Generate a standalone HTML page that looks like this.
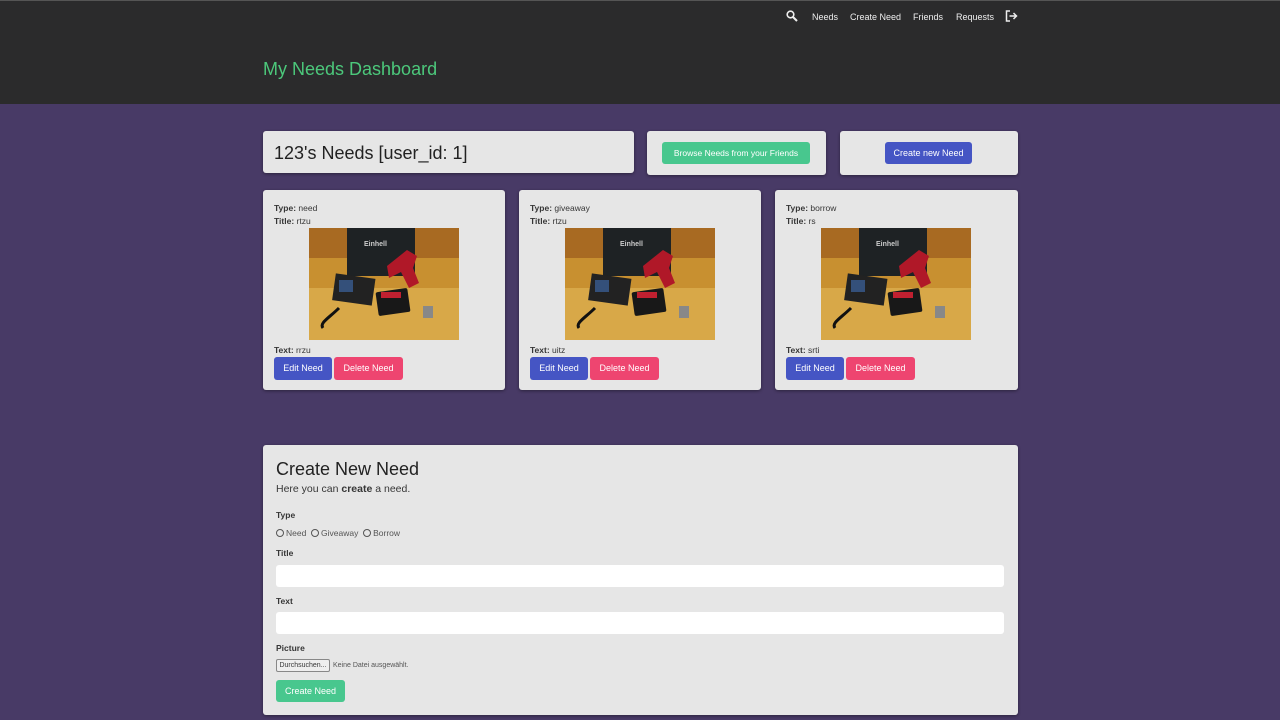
<!DOCTYPE html>
<html><head><meta charset="utf-8"><style>
*{box-sizing:border-box;margin:0;padding:0}
body{width:1280px;height:720px;overflow:hidden;background:#483a66;font-family:"Liberation Sans",sans-serif;color:#363636;position:relative}
.hdr{position:absolute;left:0;top:0;width:1280px;height:104px;background:#2b2b2c;border-top:1px solid #555}
.nav{position:absolute;top:11px;font-size:9px;color:#eee}
.h1{position:absolute;left:263px;top:58px;font-size:18px;color:#4cc87b}
.box{position:absolute;background:#e6e6e6;border-radius:3px;box-shadow:0 1px 3px rgba(0,0,0,.4)}
.btn{position:absolute;color:#fff;font-size:9px;border-radius:3px;text-align:center}
.card .l{position:absolute;left:11px;font-size:8.5px}
.card b{font-weight:bold}
.lbl{position:absolute;left:13px;font-size:8.5px;font-weight:bold}
.inp{position:absolute;left:13px;width:728px;height:22px;background:#fff;border-radius:3px}
.r{display:inline-block;width:8px;height:8px;border:1px solid #555;border-radius:50%;vertical-align:-1px;margin-right:2px}
</style></head><body>
<div class="hdr">
<svg style="position:absolute;left:786px;top:9px" width="12" height="12" viewBox="0 0 12 12"><circle cx="4.5" cy="4.5" r="3.3" stroke="#eee" stroke-width="1.6" fill="none"/><path d="M7 7L11 11" stroke="#eee" stroke-width="2"/></svg>
<div class="nav" style="left:812px">Needs</div>
<div class="nav" style="left:850px">Create Need</div>
<div class="nav" style="left:913px">Friends</div>
<div class="nav" style="left:956px">Requests</div>
<svg style="position:absolute;left:1005px;top:9px" width="13" height="12" viewBox="0 0 13 12"><path d="M5 1H1.5V11H5" stroke="#eee" stroke-width="1.5" fill="none"/><path d="M4.5 6H11M8.5 3L11.5 6L8.5 9" stroke="#eee" stroke-width="1.5" fill="none"/></svg>
<div class="h1">My Needs Dashboard</div>
</div>

<div class="box" style="left:263px;top:131px;width:371px;height:42px"><div style="position:absolute;left:11px;top:12px;font-size:18px;color:#222">123's Needs [user_id: 1]</div></div>
<div class="box" style="left:647px;top:131px;width:179px;height:44px"><div class="btn" style="left:15px;top:11px;width:148px;height:22px;line-height:22px;background:#48c78e;font-size:8.5px">Browse Needs from your Friends</div></div>
<div class="box" style="left:840px;top:131px;width:178px;height:44px"><div class="btn" style="left:45px;top:11px;width:87px;height:22px;line-height:22px;background:#4555c4">Create new Need</div></div>

<svg width="0" height="0" style="position:absolute"><defs><g id="ph">
<rect width="150" height="112" fill="#c89030"/>
<rect x="0" y="0" width="150" height="30" fill="#a86a22"/>
<rect x="0" y="60" width="150" height="52" fill="#d8a848"/>
<rect x="38" y="0" width="68" height="48" fill="#1e2224"/>
<text x="55" y="18" font-size="7" fill="#ccc" font-family="Liberation Sans" font-weight="bold">Einhell</text>
<path d="M78 38L98 22L108 28L104 40L110 55L100 60L92 44L80 50Z" fill="#b01828"/>
<rect x="25" y="48" width="40" height="27" fill="#222" transform="rotate(8 45 60)"/>
<rect x="30" y="52" width="14" height="12" fill="#34507a"/>
<rect x="68" y="62" width="32" height="24" fill="#181818" rx="2" transform="rotate(-8 84 74)"/>
<rect x="72" y="64" width="20" height="6" fill="#c02030"/>
<path d="M30 80C20 90 10 95 14 100" stroke="#111" stroke-width="3" fill="none"/>
<rect x="114" y="78" width="10" height="12" fill="#888"/>
</g></defs></svg>

<div class="box card" style="left:263px;top:190px;width:242px;height:200px">
<div class="l" style="top:13px"><b>Type:</b> need</div><div class="l" style="top:26px"><b>Title:</b> rtzu</div>
<svg style="position:absolute;left:46px;top:38px" width="150" height="112"><use href="#ph"/></svg>
<div class="l" style="top:155px"><b>Text:</b> rrzu</div>
<div class="btn" style="left:11px;top:167px;width:58px;height:23px;line-height:23px;background:#4555c4">Edit Need</div>
<div class="btn" style="left:71px;top:167px;width:69px;height:23px;line-height:23px;background:#ee4570">Delete Need</div>
</div>
<div class="box card" style="left:519px;top:190px;width:242px;height:200px">
<div class="l" style="top:13px"><b>Type:</b> giveaway</div><div class="l" style="top:26px"><b>Title:</b> rtzu</div>
<svg style="position:absolute;left:46px;top:38px" width="150" height="112"><use href="#ph"/></svg>
<div class="l" style="top:155px"><b>Text:</b> uitz</div>
<div class="btn" style="left:11px;top:167px;width:58px;height:23px;line-height:23px;background:#4555c4">Edit Need</div>
<div class="btn" style="left:71px;top:167px;width:69px;height:23px;line-height:23px;background:#ee4570">Delete Need</div>
</div>
<div class="box card" style="left:775px;top:190px;width:243px;height:200px">
<div class="l" style="top:13px"><b>Type:</b> borrow</div><div class="l" style="top:26px"><b>Title:</b> rs</div>
<svg style="position:absolute;left:46px;top:38px" width="150" height="112"><use href="#ph"/></svg>
<div class="l" style="top:155px"><b>Text:</b> srti</div>
<div class="btn" style="left:11px;top:167px;width:58px;height:23px;line-height:23px;background:#4555c4">Edit Need</div>
<div class="btn" style="left:71px;top:167px;width:69px;height:23px;line-height:23px;background:#ee4570">Delete Need</div>
</div>

<div class="box" style="left:263px;top:445px;width:755px;height:270px">
<div style="position:absolute;left:13px;top:14px;font-size:18px;color:#222">Create New Need</div>
<div style="position:absolute;left:13px;top:38px;font-size:10.5px">Here you can <b>create</b> a need.</div>
<div class="lbl" style="top:65px">Type</div>
<div style="position:absolute;left:13px;top:83px;font-size:8.5px;color:#555"><span class="r"></span>Need &nbsp;<span class="r"></span>Giveaway &nbsp;<span class="r"></span>Borrow</div>
<div class="lbl" style="top:103px">Title</div>
<div class="inp" style="top:120px"></div>
<div class="lbl" style="top:151px">Text</div>
<div class="inp" style="top:167px"></div>
<div class="lbl" style="top:198px">Picture</div>
<div style="position:absolute;left:13px;top:214px;width:54px;height:13px;border:1px solid #888;background:#eee;border-radius:2px;font-size:7px;line-height:11px;text-align:center">Durchsuchen...</div>
<div style="position:absolute;left:70px;top:217px;font-size:7px;color:#555">Keine Datei ausgewählt.</div>
<div class="btn" style="left:13px;top:235px;width:69px;height:22px;line-height:22px;background:#48c78e">Create Need</div>
</div>
</body></html>
